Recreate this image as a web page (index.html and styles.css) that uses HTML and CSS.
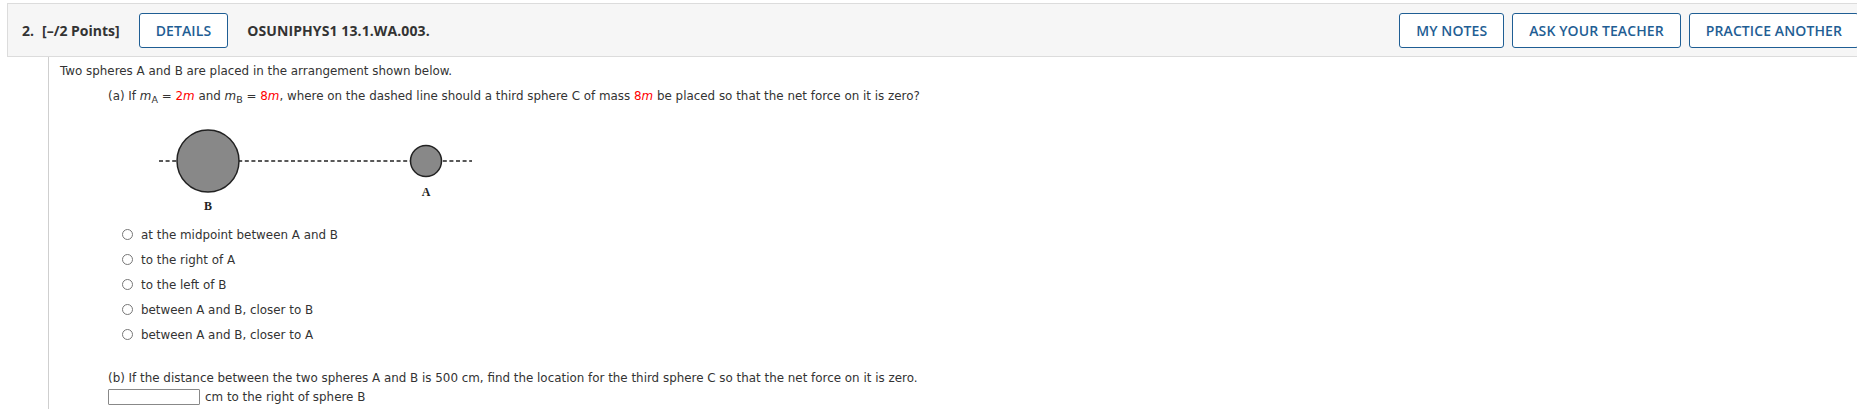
FILE: index.html
```html
<!DOCTYPE html>
<html>
<head>
<meta charset="utf-8">
<link rel="stylesheet" href="styles.css">
</head>
<body>
<div class="page">
  <div class="qhead">
    <div class="qleft">
      <span class="qnum">2.</span>
      <span class="qpts">[–/2 Points]</span>
      <button class="btn">DETAILS</button>
      <span class="qid">OSUNIPHYS1 13.1.WA.003.</span>
    </div>
    <div class="qright">
      <button class="btn">MY NOTES</button>
      <button class="btn">ASK YOUR TEACHER</button>
      <button class="btn">PRACTICE ANOTHER</button>
    </div>
  </div>
  <div class="qbody">
    <p class="intro">Two spheres A and B are placed in the arrangement shown below.</p>
    <div class="part">
      <p class="qa">(a) If <i>m</i><sub>A</sub> = <span class="red">2</span><i class="red">m</i> and <i>m</i><sub>B</sub> = <span class="red">8</span><i class="red">m</i>, where on the dashed line should a third sphere C of mass <span class="red">8</span><i class="red">m</i> be placed so that the net force on it is zero?</p>
      <svg class="diagram" width="330" height="70" viewBox="0 0 330 70">
        <line x1="52" y1="42" x2="365" y2="42" stroke="#222" stroke-width="1.6" stroke-dasharray="4 2.6"/>
        <circle cx="101" cy="42" r="31" fill="#888" stroke="#222" stroke-width="1.5"/>
        <circle cx="319" cy="42" r="15.5" fill="#888" stroke="#222" stroke-width="1.5"/>
        <text x="101" y="91" class="lbl">B</text>
        <text x="319" y="77" class="lbl">A</text>
      </svg>
      <ul class="opts">
        <li><span class="radio"></span>at the midpoint between A and B</li>
        <li><span class="radio"></span>to the right of A</li>
        <li><span class="radio"></span>to the left of B</li>
        <li><span class="radio"></span>between A and B, closer to B</li>
        <li><span class="radio"></span>between A and B, closer to A</li>
      </ul>
      <p class="qb">(b) If the distance between the two spheres A and B is 500 cm, find the location for the third sphere C so that the net force on it is zero.</p>
      <div class="ansrow"><span class="ansbox"></span><span>cm to the right of sphere B</span></div>
    </div>
  </div>
</div>
</body>
</html>
```

FILE: styles.css
```css
html, body {
  margin: 0;
  padding: 0;
  background: #fff;
  overflow: hidden;
}
.page {
  width: 1880px;
  padding-top: 3px;
}
.qhead {
  margin-left: 7px;
  width: 1862px;
  height: 54px;
  box-sizing: border-box;
  border: 1px solid #dcdcdc;
  background: #f6f6f6;
  display: flex;
  align-items: center;
  justify-content: space-between;
  padding: 0 9px 0 14px;
  font-family: "Open Sans", sans-serif;
  font-size: 14px;
  color: #333;
}
.qleft, .qright {
  display: flex;
  align-items: center;
}
.qnum {
  font-weight: 700;
  margin-right: 8px;
}
.qpts {
  font-weight: 700;
  margin-right: 19px;
}
.qid {
  font-weight: 700;
  margin-left: 19px;
  letter-spacing: 0.1px;
}
.btn {
  font-family: "Open Sans", sans-serif;
  font-size: 14px;
  font-weight: 600;
  color: #1f5e94;
  background: #fff;
  border: 1px solid #1f5e94;
  border-radius: 3px;
  height: 35px;
  padding: 0 16px;
  margin-left: 8px;
  letter-spacing: 0.1px;
}
.qleft .btn {
  margin-left: 0;
}
.qright .btn:first-child {
  margin-left: 0;
}
.qbody {
  margin-left: 48px;
  border-left: 1px solid #cfcfcf;
  padding-left: 11px;
  height: 360px;
  font-family: "DejaVu Sans", Verdana, sans-serif;
  font-size: 11.9px;
  color: #333;
}
.qbody p {
  margin: 0;
}
.intro {
  padding-top: 7px;
  line-height: 14px;
}
.part {
  padding-left: 48px;
}
.qa {
  margin-top: 11px !important;
  line-height: 14px;
}
sub {
  font-size: 9.5px;
  vertical-align: -3px;
  line-height: 0;
}
.red {
  color: #f00;
}
.diagram {
  display: block;
  margin-left: -1px;
  margin-top: 16px;
  overflow: visible;
}
.lbl {
  font-family: "Liberation Serif", serif;
  font-weight: 700;
  font-size: 12px;
  fill: #222;
  text-anchor: middle;
}
.opts {
  list-style: none;
  margin: 33px 0 0 0;
  padding: 0 0 0 14px;
}
.opts li {
  display: flex;
  align-items: center;
  height: 25px;
}
.radio {
  width: 9px;
  height: 9px;
  border: 1px solid #777;
  border-radius: 50%;
  margin-right: 8px;
  background: #fff;
}
.qb {
  margin-top: 24px !important;
  line-height: 14px;
}
.ansrow {
  display: flex;
  align-items: center;
  margin-top: 4px;
}
.ansbox {
  width: 90px;
  height: 14px;
  border: 1px solid #888;
  border-radius: 1px;
  margin-right: 5px;
}
```
